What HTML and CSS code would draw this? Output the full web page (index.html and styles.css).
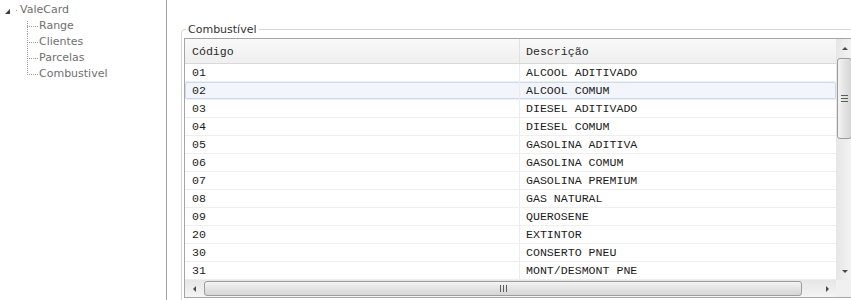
FILE: index.html
```html
<!DOCTYPE html>
<html>

<head>
    <meta charset="utf-8">
    <link rel="stylesheet" href="styles.css">
</head>

<body>
    <div class="layout">
        <aside class="sidebar">
            <ul class="tree">
                <li class="tree-root">
                    <div class="tree-node">
                        <span class="expander"></span>
                        <span class="node-dot"></span>
                        <span>ValeCard</span>
                    </div>
                    <ul class="tree-children">
                        <li>Range</li>
                        <li>Clientes</li>
                        <li>Parcelas</li>
                        <li>Combustivel</li>
                    </ul>
                </li>
            </ul>
        </aside>

        <main class="content">
            <fieldset class="group">
                <legend>Combustível</legend>
                <div class="grid">
                    <div class="grid-body">
                        <div class="grid-view">
                            <div class="grid-row grid-head">
                                <div class="cell code">Código</div>
                                <div class="cell desc">Descrição</div>
                            </div>
                            <div class="grid-row"><div class="cell code">01</div><div class="cell desc">ALCOOL ADITIVADO</div></div>
                            <div class="grid-row selected"><div class="cell code">02</div><div class="cell desc">ALCOOL COMUM</div></div>
                            <div class="grid-row"><div class="cell code">03</div><div class="cell desc">DIESEL ADITIVADO</div></div>
                            <div class="grid-row"><div class="cell code">04</div><div class="cell desc">DIESEL COMUM</div></div>
                            <div class="grid-row"><div class="cell code">05</div><div class="cell desc">GASOLINA ADITIVA</div></div>
                            <div class="grid-row"><div class="cell code">06</div><div class="cell desc">GASOLINA COMUM</div></div>
                            <div class="grid-row"><div class="cell code">07</div><div class="cell desc">GASOLINA PREMIUM</div></div>
                            <div class="grid-row"><div class="cell code">08</div><div class="cell desc">GAS NATURAL</div></div>
                            <div class="grid-row"><div class="cell code">09</div><div class="cell desc">QUEROSENE</div></div>
                            <div class="grid-row"><div class="cell code">20</div><div class="cell desc">EXTINTOR</div></div>
                            <div class="grid-row"><div class="cell code">30</div><div class="cell desc">CONSERTO PNEU</div></div>
                            <div class="grid-row"><div class="cell code">31</div><div class="cell desc">MONT/DESMONT PNE</div></div>
                        </div>
                        <div class="vscroll">
                            <div class="sb-btn"><span class="arrow-up"></span></div>
                            <div class="sb-track">
                                <div class="v-thumb"><span class="grip-h"></span></div>
                            </div>
                            <div class="sb-btn"><span class="arrow-down"></span></div>
                        </div>
                    </div>
                    <div class="hscroll">
                        <div class="sb-btn-h"><span class="arrow-left"></span></div>
                        <div class="sb-track-h">
                            <div class="h-thumb"><span class="grip-v"></span></div>
                        </div>
                        <div class="sb-btn-h"><span class="arrow-right"></span></div>
                        <div class="sb-corner"></div>
                    </div>
                </div>
            </fieldset>
        </main>
    </div>
</body>

</html>
```

FILE: styles.css
```css
html,
body {
    margin: 0;
    height: 300px;
    overflow: hidden;
    background-color: #fff;
}

.layout {
    display: flex;
    height: 300px;
}

/* tree on the left */

.sidebar {
    width: 166px;
    flex: none;
    border-right: 1px solid #a0a0a0;
    font-family: "DejaVu Sans", Verdana, sans-serif;
    font-size: 11px;
    color: #707070;
}

.tree,
.tree-children {
    list-style: none;
    margin: 0;
    padding: 0;
}

.tree {
    padding-top: 2px;
}

.tree-node {
    display: flex;
    align-items: center;
    height: 16px;
    line-height: 16px;
}

.expander {
    width: 0;
    height: 0;
    margin: 2px 0 0 5px;
    border-left: 5px solid transparent;
    border-bottom: 5px solid #3c3c3c;
}

.node-dot {
    width: 1px;
    height: 1px;
    margin: 1px 3px 0 6px;
    background-color: #9a9a9a;
}

.tree-children {
    margin-left: 27px;
}

.tree-children li {
    height: 16px;
    line-height: 16px;
    padding-left: 12px;
    background-image:
        repeating-linear-gradient(to right, #a0a0a0 0 1px, transparent 1px 2px),
        repeating-linear-gradient(to bottom, #a0a0a0 0 1px, transparent 1px 2px);
    background-size: 11px 1px, 1px 16px;
    background-position: 0 8px, 0 0;
    background-repeat: no-repeat;
}

.tree-children li:first-child {
    background-size: 11px 1px, 1px 13px;
    background-position: 0 8px, 0 3px;
}

.tree-children li:last-child {
    background-size: 11px 1px, 1px 9px;
}

/* group box */

.content {
    flex: 1;
    min-width: 0;
    overflow: hidden;
    padding: 23px 0 0 14px;
}

.group {
    margin: 0;
    padding: 2px 2px 2px 2px;
    border: 1px solid #d6d6d6;
    border-radius: 4px 0 0 0;
    width: 672px;
}

.group legend {
    margin-left: 2px;
    padding: 0 2px;
    font-family: "DejaVu Sans", Verdana, sans-serif;
    font-size: 11px;
    line-height: 13px;
    color: #333;
}

/* data grid */

.grid {
    width: 668px;
    height: 258px;
    border: 1px solid #a5a5a5;
    display: flex;
    flex-direction: column;
    background-color: #fff;
}

.grid-body {
    display: flex;
    height: 241px;
}

.grid-view {
    flex: 1;
    overflow: hidden;
}

.grid-row {
    display: flex;
    height: 17px;
    line-height: 16px;
    border-bottom: 1px solid #efefef;
    font-family: "Liberation Mono", "Courier New", monospace;
    font-size: 11.6px;
    color: #1c1c1c;
    white-space: nowrap;
}

.grid-row .cell {
    padding-top: 1px;
}

.grid-head {
    height: 24px;
    line-height: 22px;
    border-bottom: 1px solid #d9d9d9;
    background: linear-gradient(#f9f9f9, #efefef);
    color: #2a2a2a;
}

.grid-head .cell {
    padding-top: 2px;
}

.cell.code {
    width: 327px;
    padding-left: 7px;
    border-right: 1px solid #ececec;
}

.grid-head .cell.code {
    border-right-color: #e2e2e2;
}

.cell.desc {
    padding-left: 6px;
}

.grid-row.selected {
    background-color: #f2f6fc;
    box-shadow: inset 0 0 0 1px #cbdaee;
    border-radius: 2px;
}

/* scrollbars */

.vscroll {
    width: 17px;
    display: flex;
    flex-direction: column;
    background: linear-gradient(to right, #e6e6e6, #f4f4f4);
}

.sb-btn {
    height: 18px;
    display: flex;
    align-items: center;
    justify-content: center;
}

.sb-track {
    flex: 1;
    padding: 1px 1px 0 1px;
}

.v-thumb {
    height: 79px;
    border: 1px solid #9c9c9c;
    border-radius: 3px;
    background: linear-gradient(to right, #f4f4f4, #e0e0e0 60%, #d6d6d6);
    display: flex;
    align-items: center;
    justify-content: center;
}

.grip-h {
    width: 7px;
    height: 7px;
    background: repeating-linear-gradient(to bottom, #5c5c5c 0 1px, transparent 1px 3px);
}

.hscroll {
    height: 17px;
    display: flex;
    background: linear-gradient(#e6e6e6, #f4f4f4);
}

.sb-btn-h {
    width: 18px;
    display: flex;
    align-items: center;
    justify-content: center;
}

.sb-track-h {
    flex: 1;
    padding: 1px 0 1px 1px;
}

.h-thumb {
    width: 596px;
    height: 13px;
    border: 1px solid #9c9c9c;
    border-radius: 3px;
    background: linear-gradient(#f4f4f4, #e0e0e0 60%, #d6d6d6);
    display: flex;
    align-items: center;
    justify-content: center;
}

.grip-v {
    width: 7px;
    height: 7px;
    background: repeating-linear-gradient(to right, #5c5c5c 0 1px, transparent 1px 3px);
}

.sb-corner {
    width: 17px;
    background-color: #f0f0f0;
}

.arrow-up,
.arrow-down {
    width: 0;
    height: 0;
    border-left: 3px solid transparent;
    border-right: 3px solid transparent;
}

.arrow-up {
    border-bottom: 3px solid #4a4a4a;
}

.arrow-down {
    border-top: 3px solid #4a4a4a;
}

.arrow-left,
.arrow-right {
    width: 0;
    height: 0;
    border-top: 3px solid transparent;
    border-bottom: 3px solid transparent;
}

.arrow-left {
    border-right: 3px solid #4a4a4a;
}

.arrow-right {
    border-left: 3px solid #4a4a4a;
}
```
